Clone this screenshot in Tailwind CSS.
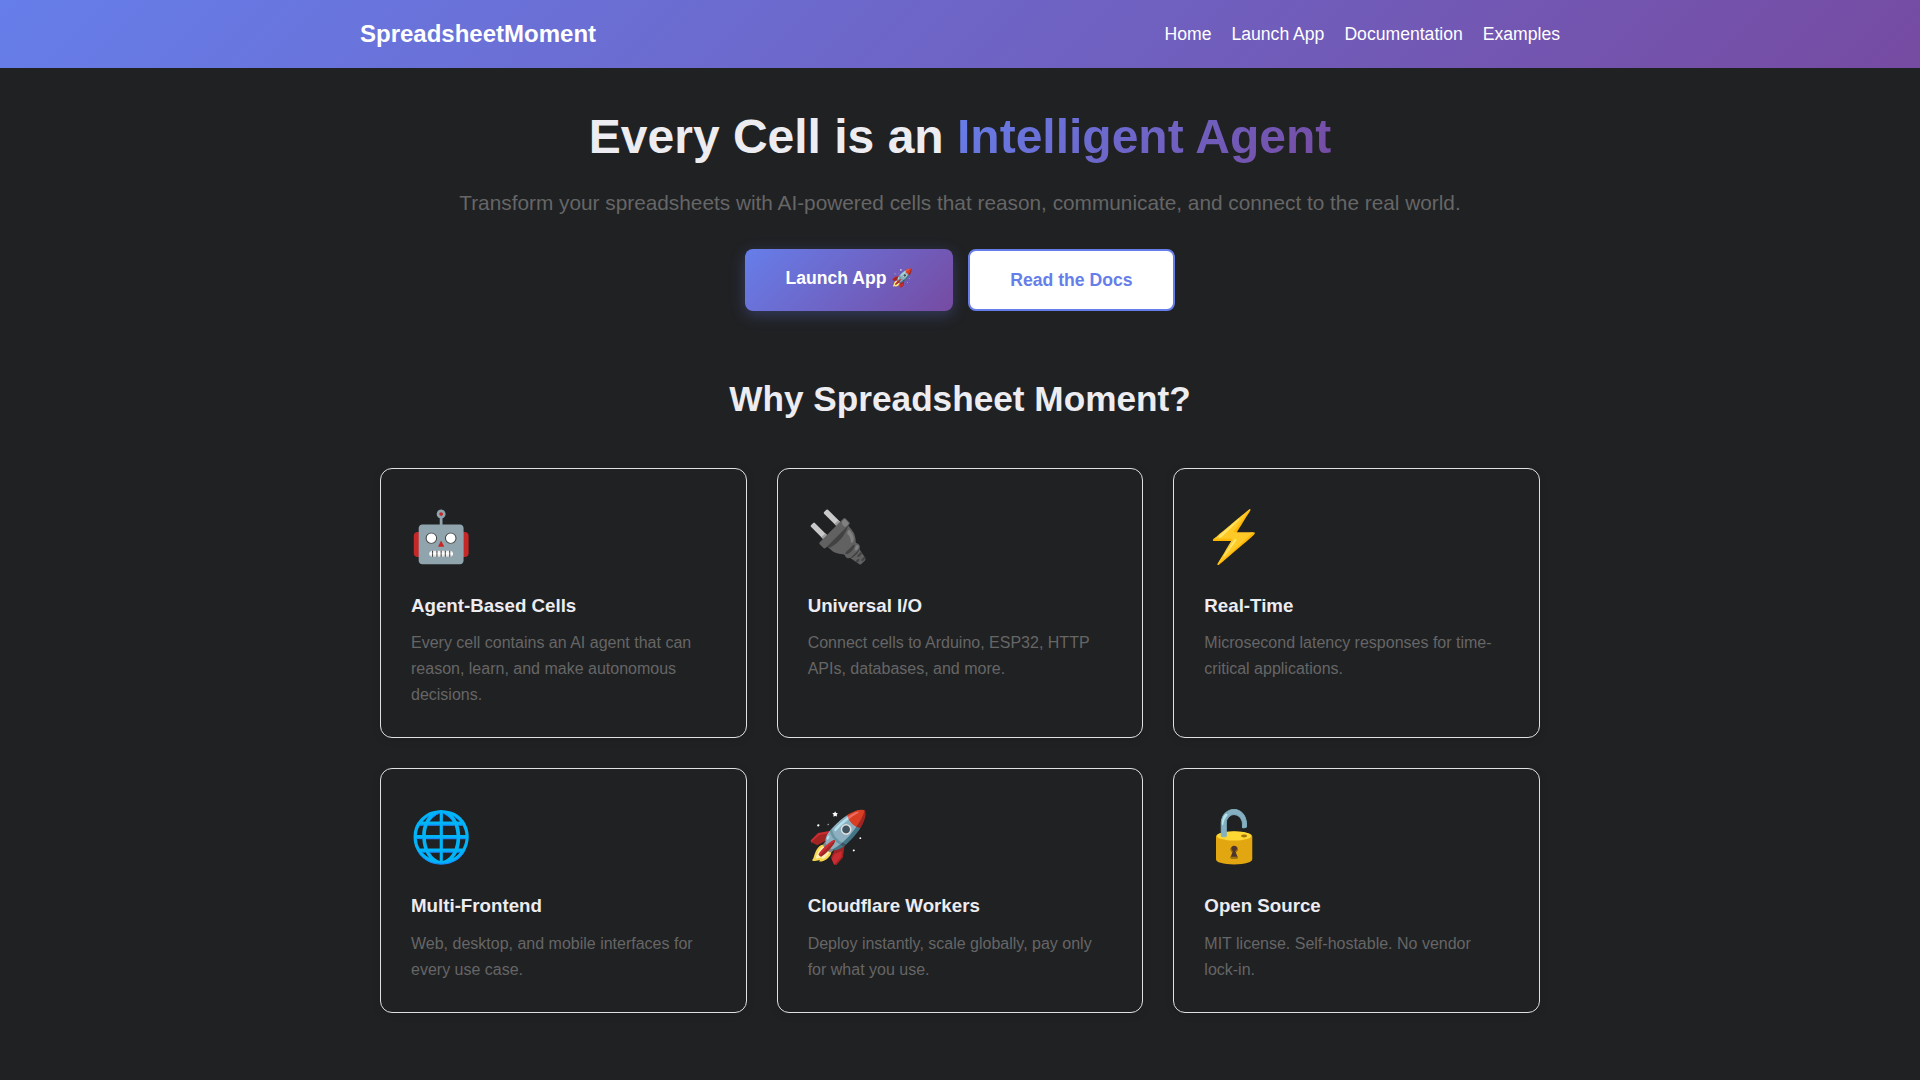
<!DOCTYPE html>
<html lang="en">
<head>
    <meta charset="UTF-8">
    <meta name="viewport" content="width=device-width, initial-scale=1.0">
    <title>SpreadsheetMoment</title>
    <script src="https://cdn.jsdelivr.net/npm/@tailwindcss/browser@4"></script>
</head>
<body class="bg-[#202123] text-[#ececf1] font-['Liberation_Sans',Arial,sans-serif] min-h-screen">
    <header class="h-[68px] bg-linear-[135deg,#667eea,#764ba2] text-white flex items-center">
        <div class="w-[1200px] mx-auto flex items-center justify-between">
            <div class="text-2xl font-bold">SpreadsheetMoment</div>
            <nav class="flex gap-5 text-[17.6px] ">
                <a href="#">Home</a>
                <a href="#">Launch App</a>
                <a href="#">Documentation</a>
                <a href="#">Examples</a>
            </nav>
        </div>
    </header>

    <main class="w-[1200px] mx-auto px-5">
        <section class="pt-10 text-center">
            <h1 class="text-5xl leading-[57.6px] font-bold">Every Cell is an <span class="bg-linear-[135deg,#667eea,#764ba2] bg-clip-text text-transparent">Intelligent Agent</span></h1>
            <p class="mt-5 text-[20.8px] leading-[33px] text-[#666]">Transform your spreadsheets with AI-powered cells that reason, communicate, and connect to the real world.</p>
            <div class="mt-[30px] flex justify-center gap-[15px] text-[17.6px] leading-[26px] font-bold">
                <a href="#" class="px-10 py-4 rounded-lg text-white bg-linear-[135deg,#667eea,#764ba2] shadow-[0_4px_15px_rgba(102,126,234,0.3)]">Launch App 🚀</a>
                <a href="#" class="px-10 py-4 rounded-lg bg-white text-[#667eea] border-2 border-[#667eea]">Read the Docs</a>
            </div>
        </section>

        <h2 class="mt-[66px] text-center text-[35.2px] leading-[44px] font-bold">Why Spreadsheet Moment?</h2>

        <section class="mt-[47px] grid grid-cols-3 gap-[30px]">
            <div class="p-[30px] border border-[#e0e0e0] rounded-xl shadow-[0_2px_8px_rgba(0,0,0,0.1)]">
                <div class="-ml-px text-[50px] leading-[76.8px]">🤖</div>
                <h3 class="mt-[15.5px] text-[18.72px] leading-[30px] font-bold">Agent-Based Cells</h3>
                <p class="mt-[9.5px] text-base leading-[25.6px] text-[#666]">Every cell contains an AI agent that can reason, learn, and make autonomous decisions.</p>
            </div>
            <div class="p-[30px] border border-[#e0e0e0] rounded-xl shadow-[0_2px_8px_rgba(0,0,0,0.1)]">
                <div class="-ml-px text-[50px] leading-[76.8px]">🔌</div>
                <h3 class="mt-[15.5px] text-[18.72px] leading-[30px] font-bold">Universal I/O</h3>
                <p class="mt-[9.5px] text-base leading-[25.6px] text-[#666]">Connect cells to Arduino, ESP32, HTTP APIs, databases, and more.</p>
            </div>
            <div class="p-[30px] border border-[#e0e0e0] rounded-xl shadow-[0_2px_8px_rgba(0,0,0,0.1)]">
                <div class="-ml-px text-[50px] leading-[76.8px]">⚡</div>
                <h3 class="mt-[15.5px] text-[18.72px] leading-[30px] font-bold">Real-Time</h3>
                <p class="mt-[9.5px] text-base leading-[25.6px] text-[#666]">Microsecond latency responses for time-critical applications.</p>
            </div>
            <div class="p-[30px] border border-[#e0e0e0] rounded-xl shadow-[0_2px_8px_rgba(0,0,0,0.1)]">
                <div class="-ml-px text-[50px] leading-[76.8px]">🌐</div>
                <h3 class="mt-[15.5px] text-[18.72px] leading-[30px] font-bold">Multi-Frontend</h3>
                <p class="mt-[9.5px] text-base leading-[25.6px] text-[#666]">Web, desktop, and mobile interfaces for every use case.</p>
            </div>
            <div class="p-[30px] border border-[#e0e0e0] rounded-xl shadow-[0_2px_8px_rgba(0,0,0,0.1)]">
                <div class="-ml-px text-[50px] leading-[76.8px]">🚀</div>
                <h3 class="mt-[15.5px] text-[18.72px] leading-[30px] font-bold">Cloudflare Workers</h3>
                <p class="mt-[9.5px] text-base leading-[25.6px] text-[#666]">Deploy instantly, scale globally, pay only for what you use.</p>
            </div>
            <div class="p-[30px] border border-[#e0e0e0] rounded-xl shadow-[0_2px_8px_rgba(0,0,0,0.1)]">
                <div class="-ml-px text-[50px] leading-[76.8px]">🔓</div>
                <h3 class="mt-[15.5px] text-[18.72px] leading-[30px] font-bold">Open Source</h3>
                <p class="mt-[9.5px] text-base leading-[25.6px] text-[#666]">MIT license. Self-hostable. No vendor lock-in.</p>
            </div>
        </section>
    </main>
</body>
</html>
